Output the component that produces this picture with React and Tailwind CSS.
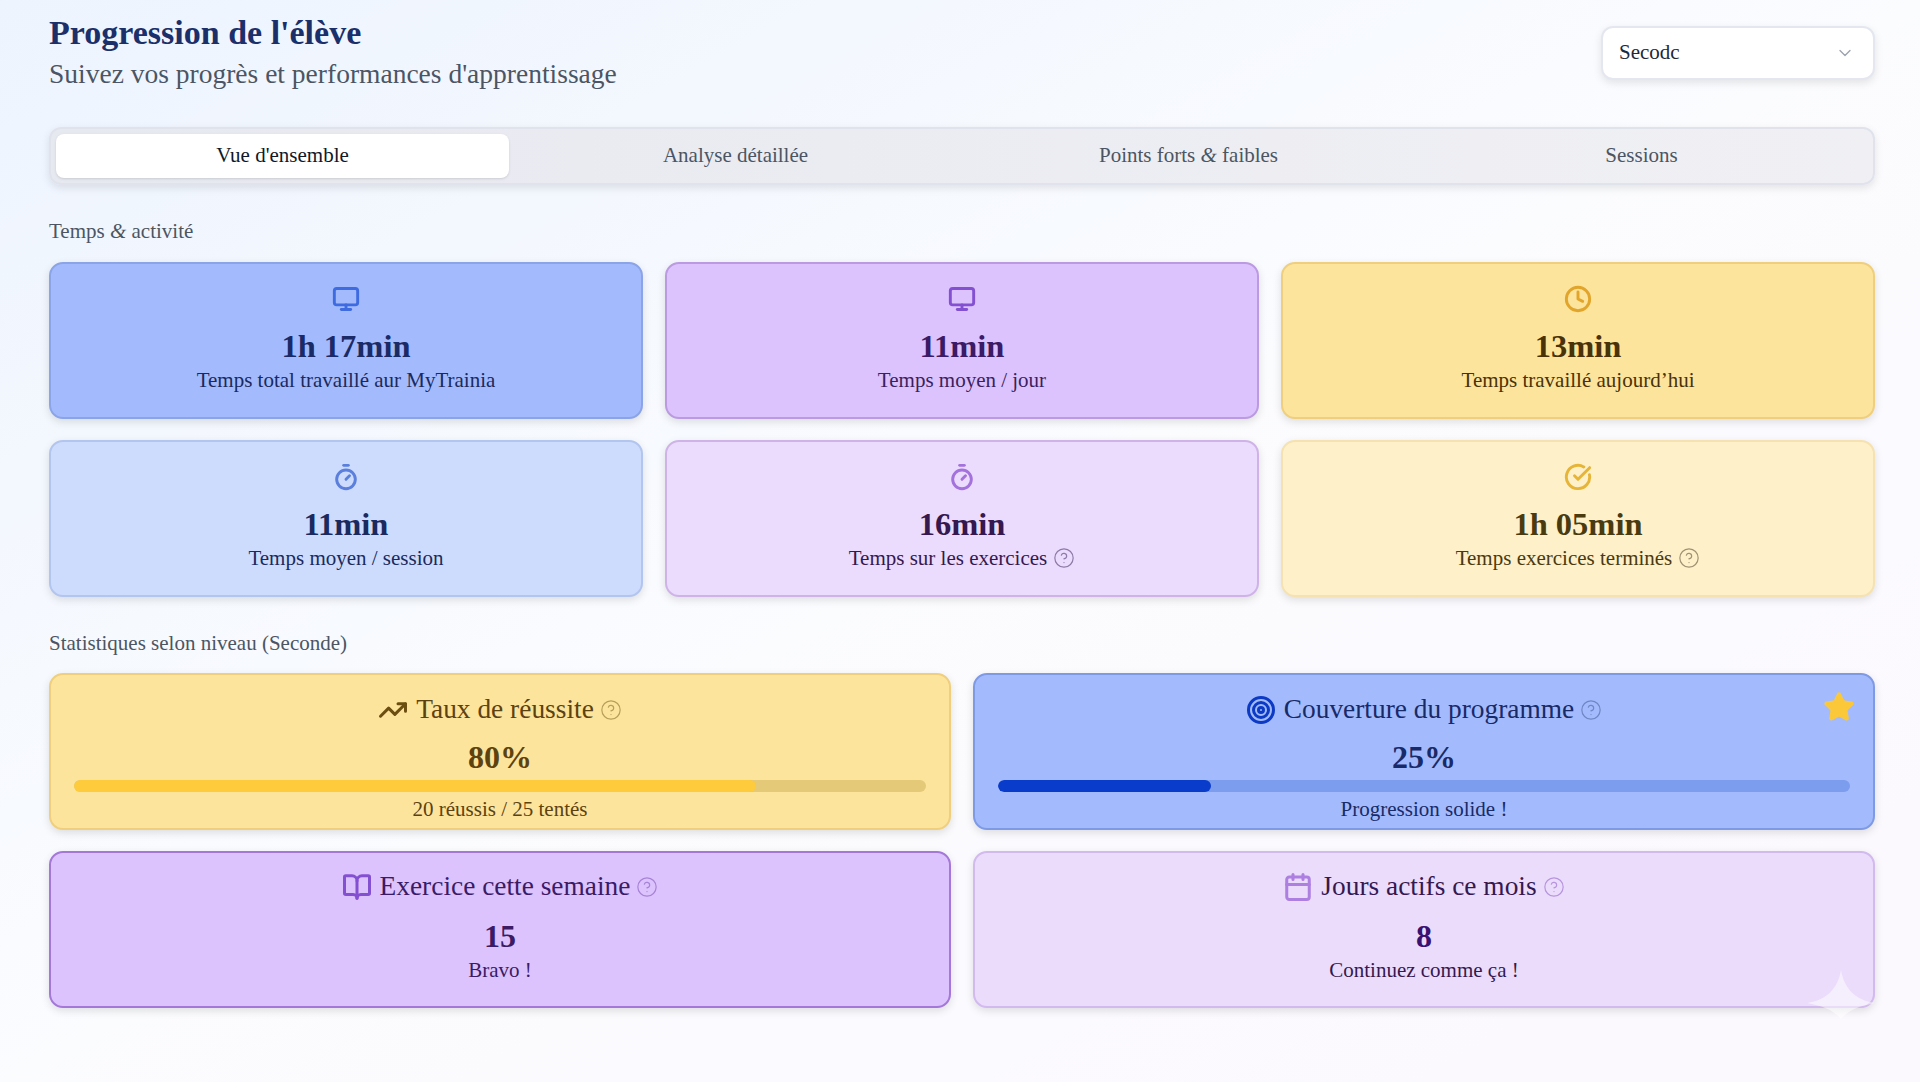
import React from "react";
import { Monitor, Clock, Timer, CircleCheckBig, TrendingUp, Target, BookOpen, Calendar, CircleHelp, Star, ChevronDown } from "lucide-react";

const serif = "font-['Liberation_Serif','DejaVu_Serif',serif]";

const tabs = ["Vue d'ensemble", "Analyse détaillée", "Points forts", "Sessions"];

function Help({ className }) {
  return <CircleHelp size={22} strokeWidth={1.3} className={className} />;
}

function Amp() {
  return <span className="italic">&amp;</span>;
}

function TimeCard({ Icon, value, label, help, box, iconColor, valueColor, labelColor, helpColor }) {
  return (
    <div className={`flex h-[157px] flex-col items-center rounded-[14px] border-2 pt-[21px] shadow-[0_3px_8px_rgba(0,0,0,0.12)] ${box}`}>
      <Icon size={28} strokeWidth={2.5} className={iconColor} />
      <div className={`mt-[14px] text-[32.5px] leading-[38px] font-bold ${valueColor}`}>{value}</div>
      <div className={`mt-[1px] flex items-center gap-[6px] text-[21px] leading-[28px] ${labelColor}`}>
        <span>{label}</span>
        {help && <Help className={helpColor} />}
      </div>
    </div>
  );
}

function StatCard({ Icon, title, value, caption, progress, box, iconColor, titleColor, valueColor, captionColor, helpColor, track, fill, star }) {
  const hasBar = progress !== undefined;
  return (
    <div className={`relative flex h-[157px] flex-col items-center rounded-[14px] border-2 ${hasBar ? "pt-[19px]" : "pt-[18px]"} shadow-[0_3px_8px_rgba(0,0,0,0.12)] ${box}`}>
      {star && <Star size={32} className="absolute right-[18px] top-[16px] fill-[#fbc83a] text-[#fbc83a]" />}
      <div className={`flex h-[32px] items-center text-[27.4px] ${titleColor}`}>
        <Icon size={30} strokeWidth={2.4} className={`mr-[8px] ${iconColor}`} />
        <span>{title}</span>
        <Help className={`ml-[6px] ${helpColor}`} />
      </div>
      <div className={`${hasBar ? "mt-[13px]" : "mt-[15px]"} text-[32px] leading-[36px] font-bold ${valueColor}`}>{value}</div>
      {hasBar && (
        <div className={`mt-[5px] h-[12px] w-[calc(100%-46px)] overflow-hidden rounded-full ${track}`}>
          <div className={`h-full rounded-full ${fill}`} style={{ width: `${progress}%` }} />
        </div>
      )}
      <div className={`${hasBar ? "mt-[3px]" : "mt-[2px]"} text-[21px] leading-[28px] ${captionColor}`}>{caption}</div>
    </div>
  );
}

export default function App() {
  return (
    <div className={`${serif} relative min-h-[1082px] overflow-hidden bg-gradient-to-br from-[#edf4fe] via-[#fbfcfe] to-[#fbf8fe] px-[49px] pr-[45px] pt-[12px]`}>
      <header className="flex items-start justify-between">
        <div>
          <h1 className="text-[34px] leading-[42px] font-bold text-[#1b2f6b]">Progression de l'élève</h1>
          <p className="mt-[4px] text-[27.5px] leading-[32px] text-[#4b5563]">Suivez vos progrès et performances d'apprentissage</p>
        </div>
        <button className="mt-[14px] flex h-[54px] w-[274px] items-center justify-between rounded-[12px] border-2 border-[#e5e7f0] bg-white pl-[16px] pr-[18px] text-[21px] text-[#1f2937] shadow-[0_3px_8px_rgba(0,0,0,0.1)]">
          <span>Secodc</span>
          <ChevronDown size={20} strokeWidth={1.6} className="text-[#9ca3af]" />
        </button>
      </header>

      <nav className="mt-[37px] grid h-[58px] grid-cols-4 rounded-[12px] border-2 border-[#e0e3ec] bg-gradient-to-r from-[#e7e9f0] to-[#f0f0f4] p-[5px] shadow-[0_3px_8px_rgba(0,0,0,0.1)]">
        {tabs.map((t, i) => (
          <div key={t} className={`flex items-center justify-center rounded-[8px] text-[21px] ${i === 0 ? "bg-white text-[#111827] shadow-sm" : "text-[#4b5563]"}`}>
            {i === 2 ? <span>Points forts <Amp /> faibles</span> : t}
          </div>
        ))}
      </nav>

      <h2 className="mt-[34px] text-[21px] leading-[24px] text-[#4b5563]">Temps <Amp /> activité</h2>
      <section className="mt-[19px] grid grid-cols-3 gap-x-[22px] gap-y-[21px]">
        <TimeCard Icon={Monitor} value="1h 17min" label="Temps total travaillé aur MyTrainia" box="border-[#8ba4e8] bg-[#a3bbfd]" iconColor="text-[#3f6be0]" valueColor="text-[#1a2a66]" labelColor="text-[#1a2a5e]" />
        <TimeCard Icon={Monitor} value="11min" label="Temps moyen / jour" box="border-[#bb9ae2] bg-[#dcc3fd]" iconColor="text-[#8450d2]" valueColor="text-[#3b1a66]" labelColor="text-[#3b1f60]" />
        <TimeCard Icon={Clock} value="13min" label="Temps travaillé aujourd’hui" box="border-[#efcf7d] bg-[#fde49c]" iconColor="text-[#e0a52a]" valueColor="text-[#4a3208]" labelColor="text-[#4a3208]" />
        <TimeCard Icon={Timer} value="11min" label="Temps moyen / session" box="border-[#b2c5ee] bg-[#cddcfd]" iconColor="text-[#5b7fdc]" valueColor="text-[#1a2a5e]" labelColor="text-[#1a2a5e]" />
        <TimeCard Icon={Timer} value="16min" label="Temps sur les exercices" help box="border-[#cfb3e8] bg-[#ebdcfd]" iconColor="text-[#a372dd]" valueColor="text-[#35184f]" labelColor="text-[#35184f]" helpColor="text-[#8e7aa6]" />
        <TimeCard Icon={CircleCheckBig} value="1h 05min" label="Temps exercices terminés" help box="border-[#f5e2b0] bg-[#fef0c9]" iconColor="text-[#e6b437]" valueColor="text-[#4a3a10]" labelColor="text-[#4a3a10]" helpColor="text-[#a09272]" />
      </section>

      <h2 className="mt-[34px] text-[21px] leading-[24px] text-[#4b5563]">Statistiques selon niveau (Seconde)</h2>
      <section className="mt-[18px] grid grid-cols-2 gap-x-[22px] gap-y-[21px]">
        <StatCard Icon={TrendingUp} title="Taux de réussite" value="80%" caption="20 réussis / 25 tentés" progress={80} box="border-[#efcf7d] bg-[#fde49c]" iconColor="text-[#6b4e10]" titleColor="text-[#5c4210]" valueColor="text-[#5c4210]" captionColor="text-[#5c4210]" helpColor="text-[#b79f5a]" track="bg-[#e3c978]" fill="bg-[#fdcb3c]" />
        <StatCard star Icon={Target} title="Couverture du programme" value="25%" caption="Progression solide !" progress={25} box="border-[#7f9ae4] bg-[#a3bbfd]" iconColor="text-[#0d3ac4]" titleColor="text-[#182a68]" valueColor="text-[#182a68]" captionColor="text-[#182a68]" helpColor="text-[#6f86c4]" track="bg-[#7c9cee]" fill="bg-[#0a3ccc]" />
        <StatCard Icon={BookOpen} title="Exercice cette semaine" value="15" caption="Bravo !" box="border-[#a477d8] bg-[#dcc3fd]" iconColor="text-[#8450d2]" titleColor="text-[#3b1a66]" valueColor="text-[#3b1a66]" captionColor="text-[#3b1a66]" helpColor="text-[#a683d6]" />
        <div className="relative">
          <StatCard Icon={Calendar} title="Jours actifs ce mois" value="8" caption="Continuez comme ça !" box="border-[#d2b9ee] bg-[#ebdcfb]" iconColor="text-[#ad7fe0]" titleColor="text-[#35184f]" valueColor="text-[#3a1070]" captionColor="text-[#35184f]" helpColor="text-[#b795de]" />
          <svg viewBox="0 0 68 49" className="absolute bottom-[-11px] right-0 h-[49px] w-[68px]" fill="#ffffff" fillOpacity="0.5">
            <path d="M34 0C37 18 48 30 68 33C52 36 42 40 34 49C26 40 16 36 0 33C20 30 31 18 34 0Z" />
          </svg>
        </div>
      </section>
    </div>
  );
}
